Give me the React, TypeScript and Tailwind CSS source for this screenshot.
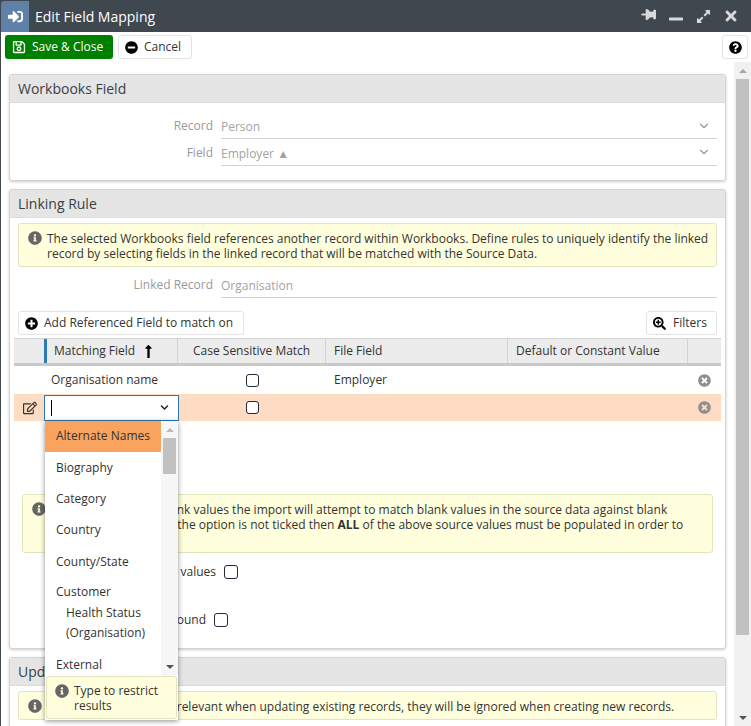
import {
  FaChevronDown,
  FaExpandAlt,
  FaInfoCircle,
  FaLongArrowAltUp,
  FaMinus,
  FaMinusCircle,
  FaPlusCircle,
  FaQuestionCircle,
  FaRegEdit,
  FaRegSave,
  FaSearchPlus,
  FaSignInAlt,
  FaThumbtack,
  FaTimes,
  FaTimesCircle,
} from 'react-icons/fa';
import { LuChevronDown } from 'react-icons/lu';
import type { ReactNode } from 'react';

function Panel({ title, children }: { title: string; children: ReactNode }) {
  return (
    <div className="w-[717px] ml-[8px] mb-[8px] shrink-0 rounded-[3px] border border-[#d4d4d4] bg-white shadow-[0_1px_3px_rgba(0,0,0,0.2)]">
      <div className="h-[28px] pl-[8px] flex items-center text-[14px] text-[#3a3f45] bg-[#e5e5e5] border-b border-[#dcdcdc]">
        {title}
      </div>
      {children}
    </div>
  );
}

function Note({ className, children }: { className: string; children: ReactNode }) {
  return (
    <div className={`relative rounded-[3px] border border-[#e3e3bd] bg-[#ffffdd] text-[12px] leading-[15px] text-[#333] ${className}`}>
      <FaInfoCircle className="absolute left-[9px] top-[7px] text-[14px] text-[#666]" />
      {children}
    </div>
  );
}

function FormRow({ label, value, height, arrow }: { label: string; value: string; height: string; arrow?: boolean }) {
  return (
    <div className={`flex items-center text-[12px] ${height}`}>
      <div className="w-[211px] text-right text-[#999] pr-[8px]">{label}</div>
      <div className="flex-1 mr-[8px] h-full flex items-center justify-between border-b border-[#d2d2d2] text-[#a3a3a3]">
        <span className="pt-[3px]">{value}</span>
        {arrow && <LuChevronDown className="mr-[6px] text-[14px] text-[#999]" />}
      </div>
    </div>
  );
}

function Checkbox({ big }: { big?: boolean }) {
  return (
    <span className={`inline-block rounded-[3px] border border-[#1f2937] bg-white ${big ? 'w-[14px] h-[14px]' : 'w-[13px] h-[13px]'}`} />
  );
}

const Option = ({ children, active }: { children: ReactNode; active?: boolean }) => (
  <div className={`h-[31.4px] pl-[11px] flex items-center shrink-0 ${active ? 'bg-[#f9a45e]' : ''}`}>{children}</div>
);

function Dropdown() {
  return (
    <div className="absolute left-0 top-[25px] w-[133px] h-[299px] z-10 bg-white shadow-[0_1px_5px_rgba(0,0,0,0.45)] text-[12px] text-[#333] overflow-hidden">
      <div className="flex h-[255px]">
        <div className="w-[116px] overflow-hidden">
          <Option active>Alternate Names</Option>
          <Option>Biography</Option>
          <Option>Category</Option>
          <Option>Country</Option>
          <Option>County/State</Option>
          <div className="pl-[11px] pt-[5px] pb-[10px] leading-[20.5px]">
            <div>Customer</div>
            <div className="pl-[10px]">Health Status</div>
            <div className="pl-[10px]">(Organisation)</div>
          </div>
          <div className="pl-[11px] leading-[21px]">External</div>
        </div>
        <div className="w-[17px] flex flex-col items-center bg-[#f6f6f6]">
          <span className="mt-[7px] w-0 h-0 border-x-[4px] border-x-transparent border-b-[4px] border-b-[#bbb]" />
          <span className="mt-[6px] w-[13px] h-[36px] bg-[#c1c1c1]" />
          <span className="mt-auto mb-[7px] w-0 h-0 border-x-[4px] border-x-transparent border-t-[4px] border-t-[#555]" />
        </div>
      </div>
      <div className="relative ml-[1px] w-[131px] h-[43px] rounded-[3px] border border-[#e3e3bd] bg-[#ffffdd] pl-[27px] pt-[6px] leading-[15px]">
        <FaInfoCircle className="absolute left-[8px] top-[7px] text-[14px] text-[#666]" />
        Type to restrict results
      </div>
    </div>
  );
}

export default function App() {
  return (
    <div className="w-[751px] h-[726px] overflow-hidden flex flex-col bg-white border-l border-[#3f474f] font-['Open_Sans',sans-serif] text-[12px] text-[#333]">
      {/* Title bar */}
      <div className="h-[32px] shrink-0 flex items-center bg-[#3f474f] text-white">
        <div className="w-[28px] h-[31px] mt-[1px] rounded-tl-[3px] flex items-center justify-center bg-[#5f81a8]">
          <FaSignInAlt className="text-[15px]" />
        </div>
        <div className="ml-[6px] text-[14px]">Edit Field Mapping</div>
        <div className="ml-auto flex items-center gap-[12px] mr-[12px] text-[#d9d9d9]">
          <FaThumbtack className="text-[15px] rotate-90 mb-[3px]" />
          <FaMinus className="text-[16px] mt-[6px]" />
          <FaExpandAlt className="text-[15px]" />
          <FaTimes className="text-[16px]" />
        </div>
      </div>

      {/* Toolbar */}
      <div className="h-[30px] shrink-0 flex items-center pl-[4px] pr-[3px] gap-[5px]">
        <button className="h-[24px] w-[108px] rounded-[3px] bg-[#008000] text-white flex items-center pl-[7px] gap-[6px]">
          <FaRegSave className="text-[14px]" />
          Save &amp; Close
        </button>
        <button className="h-[24px] w-[74px] rounded-[3px] border border-[#e3e3e3] flex items-center pl-[6px] gap-[6px]">
          <FaMinusCircle className="text-[13px] text-black" />
          Cancel
        </button>
        <button className="ml-auto h-[24px] w-[26px] rounded-[3px] border border-[#e3e3e3] flex items-center justify-center">
          <FaQuestionCircle className="text-[13px] text-black" />
        </button>
      </div>

      <div className="flex-1 min-h-0 flex">
        <div className="w-[733px] overflow-hidden pt-[12px] flex flex-col">
          <Panel title="Workbooks Field">
            <div className="pt-[10px] pb-[14px]">
              <FormRow label="Record" value="Person" height="h-[26px]" arrow />
              <FormRow label="Field" value="Employer ▲" height="h-[27px]" arrow />
            </div>
          </Panel>

          <Panel title="Linking Rule">
            <div className="pt-[5px] px-[8px]">
              <Note className="h-[44px] pl-[28px] pr-[4px] pt-[7px]">
                The selected Workbooks field references another record within Workbooks. Define rules to uniquely identify the linked record by selecting fields in the linked record that will be matched with the Source Data.
              </Note>
            </div>
            <div className="mt-[5px]">
              <FormRow label="Linked Record" value="Organisation" height="h-[26px]" />
            </div>
            <div className="mt-[13px] px-[8px] flex justify-between">
              <button className="h-[24px] w-[226px] rounded-[3px] border border-[#e3e3e3] flex items-center pl-[6px] gap-[6px]">
                <FaPlusCircle className="text-[13px] text-black" />
                Add Referenced Field to match on
              </button>
              <button className="h-[24px] w-[71px] rounded-[3px] border border-[#e3e3e3] flex items-center pl-[6px] gap-[7px]">
                <FaSearchPlus className="text-[13px] text-black" />
                Filters
              </button>
            </div>

            <div className="mt-[3px] mx-[4px]">
              <div className="flex h-[28px] bg-[#ececec] border-y border-[#d4d4d4] border-b-[3px] border-b-[#c9c9c9]">
                <div className="w-[30px]" />
                <div className="w-[134px] border-l-[3px] border-[#2a7ab8] border-r border-r-[#d4d4d4] pl-[7px] flex items-center gap-[6px]">
                  Matching Field
                  <FaLongArrowAltUp className="text-[15px] text-black" />
                </div>
                <div className="w-[148px] border-r border-[#d4d4d4] pl-[15px] flex items-center">Case Sensitive Match</div>
                <div className="w-[182px] border-r border-[#d4d4d4] pl-[8px] flex items-center">File Field</div>
                <div className="w-[180px] border-r border-[#d4d4d4] pl-[8px] flex items-center">Default or Constant Value</div>
                <div className="flex-1" />
              </div>
              <div className="flex h-[28px] items-center">
                <div className="w-[30px]" />
                <div className="w-[134px] pl-[7px]">Organisation name</div>
                <div className="w-[148px] flex justify-center"><Checkbox /></div>
                <div className="w-[182px] pl-[8px]">Employer</div>
                <div className="w-[180px]" />
                <div className="flex-1 flex justify-center"><FaTimesCircle className="text-[13px] text-[#8f8f8f]" /></div>
              </div>
              <div className="flex h-[27px] items-center bg-[#fddcc3]">
                <div className="w-[30px] flex justify-center pl-[2px]"><FaRegEdit className="text-[14px] text-[#333]" /></div>
                <div className="relative w-[135px] h-[26px] border border-[#2a7ab8] bg-white flex items-center pl-[6px] justify-between">
                  <span className="w-px h-[16px] bg-black" />
                  <FaChevronDown className="mr-[9px] text-[9px] text-[#222]" />
                  <Dropdown />
                </div>
                <div className="w-[147px] flex justify-center"><Checkbox /></div>
                <div className="w-[182px]" />
                <div className="w-[180px]" />
                <div className="flex-1 flex justify-center"><FaTimesCircle className="text-[13px] text-[#8f8f8f]" /></div>
              </div>
            </div>

            <div className="mt-[73px] mx-[12px]">
              <Note className="h-[59px] pl-[24px] pr-[4px] pt-[7px]">
                <div className="whitespace-nowrap">If you tick match on blank values the import will attempt to match blank values in the source data against blank</div>
                <div className="whitespace-nowrap ml-[3px]">values in the record. If the option is not ticked then <b>ALL</b> of the above source values must be populated in order to</div>
                <div className="whitespace-nowrap">create a valid relation.</div>
              </Note>
            </div>
            <div className="mt-[11px] h-[16px] pl-[81px] flex items-center gap-[8px]">
              Match on blank values <Checkbox big />
            </div>
            <div className="mt-[32px] h-[16px] pl-[53px] flex items-center gap-[8px]">
              Error if no match is found <Checkbox big />
            </div>
            <div className="h-[20px]" />
          </Panel>

          <Panel title="Update Rule">
            <div className="pt-[5px] px-[8px]">
              <Note className="h-[29px] pl-[28px] pt-[7px] whitespace-nowrap">
                These options are only relevant when updating existing records, they will be ignored when creating new records.
              </Note>
            </div>
            <div className="h-[40px]" />
          </Panel>
        </div>

        {/* Scrollbar */}
        <div className="flex-1 bg-[#f1f1f1] flex flex-col items-center">
          <span className="mt-[7px] w-0 h-0 border-x-[4px] border-x-transparent border-b-[4px] border-b-[#a8a8a8]" />
          <span className="mt-[6px] w-[13px] h-[556px] bg-[#c1c1c1]" />
          <span className="mt-auto mb-[6px] w-0 h-0 border-x-[4px] border-x-transparent border-t-[4px] border-t-[#555]" />
        </div>
      </div>
    </div>
  );
}
